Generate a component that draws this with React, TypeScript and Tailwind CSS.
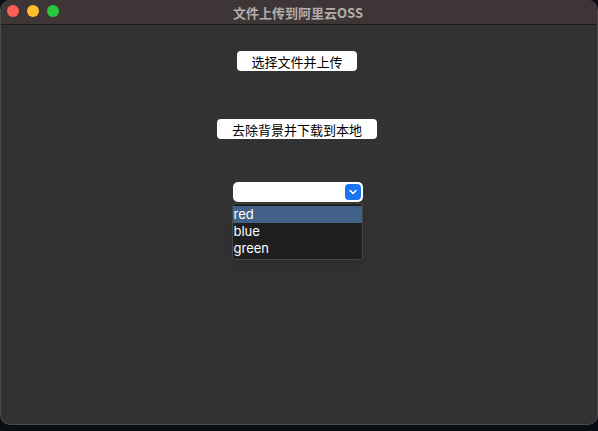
import { useState } from "react";

const options = ["red", "blue", "green"];

export default function App() {
    const [selected, setSelected] = useState("red");

    return (
        <div
            className="w-[598px] h-[431px] bg-[#0a0d14] overflow-hidden"
            style={{ fontFamily: '"Noto Sans CJK SC", "Noto Sans", sans-serif' }}
        >
            <div className="w-[598px] h-[425px] rounded-[10px] overflow-hidden border border-[#4a4a4a] border-t-0 bg-[#323232] flex flex-col">
                {/* title bar */}
                <div className="relative h-[25px] shrink-0 bg-[#3e3636] border-b border-[#1c1c1c] flex items-center justify-center pr-[2px]">
                    <div className="absolute left-[6px] top-[5px] flex gap-[8px]">
                        <span className="w-[12px] h-[12px] rounded-full bg-[#fe5f57]" />
                        <span className="w-[12px] h-[12px] rounded-full bg-[#febc2e]" />
                        <span className="w-[12px] h-[12px] rounded-full bg-[#28c840]" />
                    </div>
                    <span className="text-[13px] font-bold text-[#b3acac] leading-none">文件上传到阿里云OSS</span>
                </div>

                {/* content */}
                <div className="flex-1 flex flex-col items-center pt-[26px] pr-[4px]">
                    <button className="w-[120px] h-[20px] rounded-[4px] bg-white text-black text-[13px] leading-none">
                        选择文件并上传
                    </button>
                    <button className="mt-[48px] w-[160px] h-[20px] rounded-[4px] bg-white text-black text-[13px] leading-none">
                        去除背景并下载到本地
                    </button>

                    <div className="relative mt-[43px] ml-[1px]">
                        <div className="w-[130px] h-[20px] rounded-[5px] bg-white flex items-center justify-end pr-[2px]">
                            <div className="w-[16px] h-[16px] rounded-[4px] bg-[#1a73f0] flex items-center justify-center">
                                <svg width="8" height="6" viewBox="0 0 8 6" fill="none">
                                    <path d="M1 1.5 L4 4.5 L7 1.5" stroke="white" strokeWidth="1.6" strokeLinecap="round" strokeLinejoin="round" />
                                </svg>
                            </div>
                        </div>
                        <div
                            className="absolute left-[-1px] top-[21px] w-[131px] py-[2px] bg-[#1f1f1f] border border-[#454545] rounded-[3px] shadow-lg"
                            style={{ fontFamily: 'Inter, "Liberation Sans", sans-serif' }}
                        >
                            {options.map((opt) => (
                                <div
                                    key={opt}
                                    onMouseEnter={() => setSelected(opt)}
                                    className={
                                        "h-[17px] pl-[1px] text-[13px] leading-[17px] text-white overflow-hidden " +
                                        (selected === opt ? "bg-[#416189]" : "")
                                    }
                                >
                                    {opt}
                                </div>
                            ))}
                        </div>
                    </div>
                </div>
            </div>
        </div>
    );
}
